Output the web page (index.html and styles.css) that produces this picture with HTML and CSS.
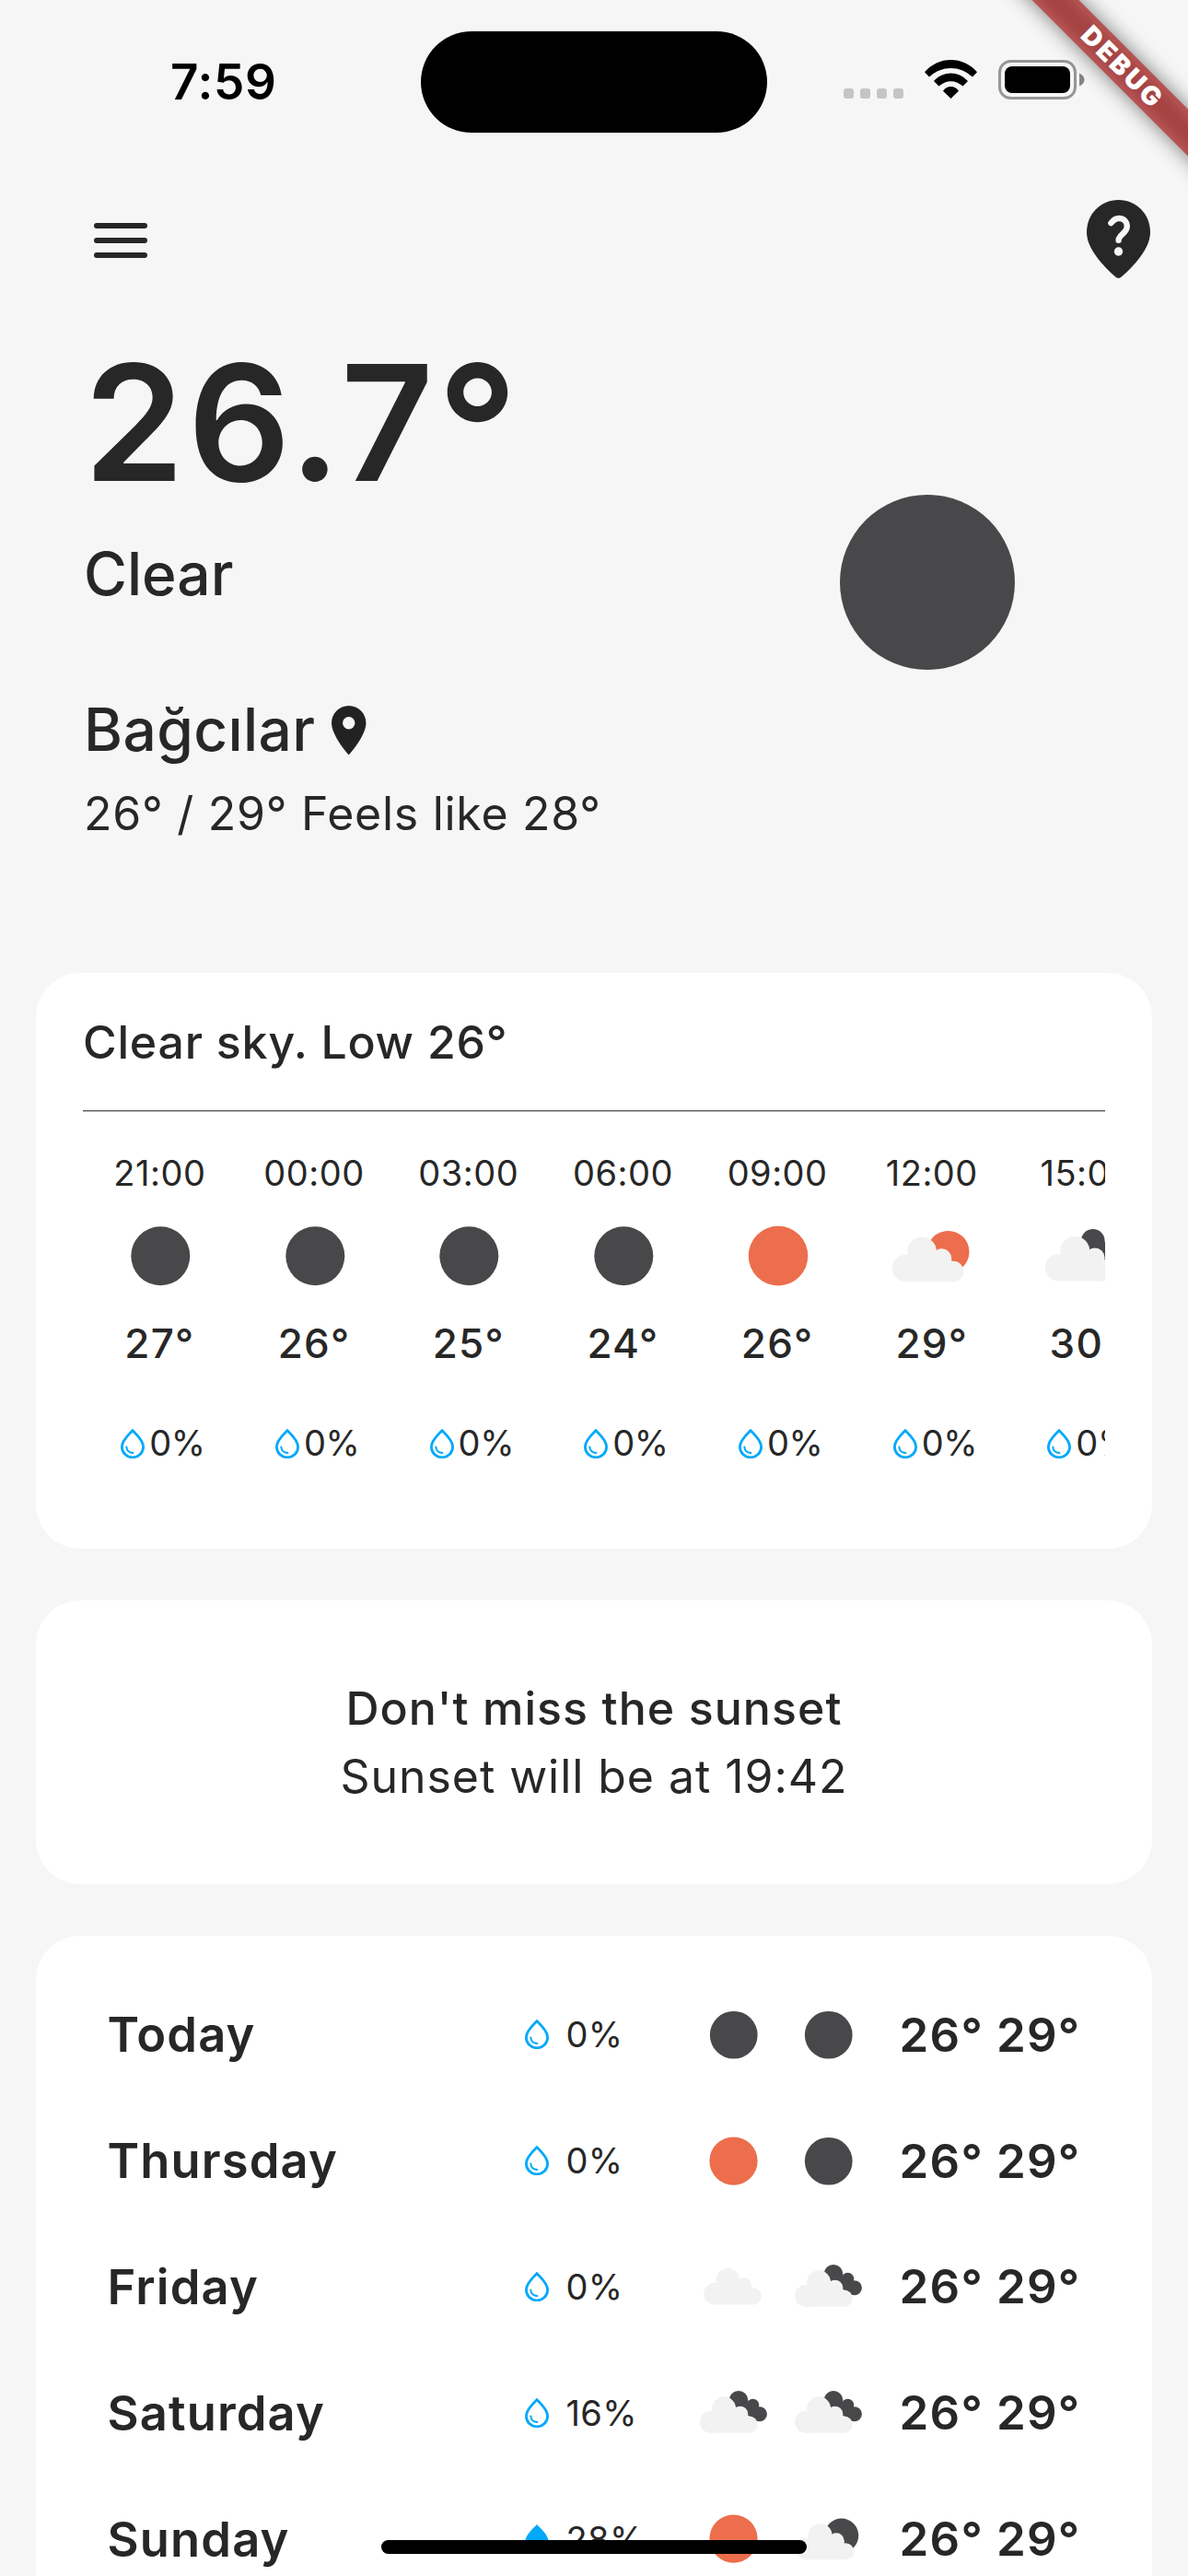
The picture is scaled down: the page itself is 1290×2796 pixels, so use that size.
FILE: index.html
```html
<!DOCTYPE html>
<html lang="en">
<head>
<meta charset="utf-8">
<title>Weather</title>
<link rel="stylesheet" href="styles.css">
</head>
<body>
<svg class="sprite" aria-hidden="true">
  <symbol id="moon" viewBox="0 0 120 120"><circle cx="60.3" cy="60.3" r="32" fill="#48484a"/></symbol>
  <symbol id="sun" viewBox="0 0 120 120"><circle cx="60" cy="60.1" r="32.3" fill="#ec6e4c"/></symbol>
  <symbol id="cloud-shape" viewBox="0 0 120 120">
    <g fill="#f2f2f2">
      <circle cx="31.3" cy="73.6" r="14.6"/><circle cx="49" cy="55.6" r="16"/>
      <circle cx="70.7" cy="62.8" r="10.5"/><circle cx="83" cy="77" r="11.2"/>
      <rect x="31.3" y="62" width="49.9" height="26.2"/><rect x="80" y="70" width="3" height="18.2"/>
    </g>
  </symbol>
  <symbol id="cloud" viewBox="0 0 120 120"><use href="#cloud-shape" x="3.4" y="-3.6" width="120" height="120"/></symbol>
  <symbol id="cloud-sun" viewBox="0 0 120 120">
    <circle cx="77.6" cy="55.8" r="22.9" fill="#ec6e4c"/>
    <use href="#cloud-shape" width="120" height="120"/>
  </symbol>
  <symbol id="cloud-moon" viewBox="0 0 120 120">
    <circle cx="77.6" cy="55.8" r="22.9" fill="#48484a"/>
    <use href="#cloud-shape" width="120" height="120"/>
  </symbol>
  <symbol id="clouds" viewBox="0 0 120 120">
    <g fill="#48484a">
      <circle cx="66.8" cy="43.8" r="12.8"/><circle cx="86" cy="50.2" r="8.4"/><circle cx="95" cy="62.2" r="10"/>
      <path d="M66 50L86 50L96 72L88 70L76 62Z"/>
    </g>
    <use href="#cloud-shape" x="-1.8" y="-.8" width="120" height="120"/>
  </symbol>
  <symbol id="drop" viewBox="0 0 26 32">
    <path d="M13 1.7C9.8 5.2 1.4 12 1.4 19.4A11.6 11.4 0 0 0 24.6 19.4C24.6 12 16.2 5.2 13 1.7Z" fill="none" stroke="#03a9f9" stroke-width="2.8"/>
    <path d="M6.3 19.4C6.6 23.4 9.4 26 13.4 26" fill="none" stroke="#03a9f9" stroke-width="2" stroke-linecap="round"/>
  </symbol>
  <symbol id="drop-full" viewBox="0 0 26 32">
    <path d="M13 0C9.4 4 .2 11.3 .2 19.2A12.8 12.8 0 0 0 25.8 19.2C25.8 11.3 16.6 4 13 0Z" fill="#03a9f9"/>
  </symbol>
</svg>

<div class="screen">
  <header class="status-bar">
    <span class="clock">7:59</span>
    <div class="status-icons">
      <div class="signal"><i></i><i></i><i></i><i></i></div>
      <svg class="wifi" viewBox="0 0 57 42"><path d="M0 13.3A37.2 37.2 0 0 1 57 13.3L52 18.5A33.8 33.8 0 0 0 5 18.5ZM10 23A24.4 24.4 0 0 1 47 23L41.5 28.5A18.8 18.8 0 0 0 15.5 28.5ZM20 33.7A9.9 9.9 0 0 1 37 33.7L28.5 42Z"/></svg>
      <svg class="battery" viewBox="0 0 94 43"><rect x="1.5" y="1.5" width="82" height="40" rx="12" fill="none" stroke="#969696" stroke-width="3"/><rect x="7" y="7" width="71" height="29" rx="8"/><path d="M88 14.5Q93.5 17 93.5 21.5T88 28.5Z" fill="#868686"/></svg>
    </div>
  </header>
  <div class="island"></div>

  <nav class="app-bar">
    <div class="menu"><i></i><i></i><i></i></div>
    <svg class="help-pin" viewBox="0 0 69 85">
      <path d="M34.5 0C54 0 69 15.5 69 35C69 52 53.5 69.5 37.7 83.6Q34.5 86.2 31.3 83.6C15.5 69.5 0 52 0 35C0 15.5 15 0 34.5 0Z" fill="#272727"/>
      <path d="M26.4 25.2C29 21.7 31.8 20 35 20C40.6 20 43.8 24 43.8 28.7C43.8 36 34.6 38 34.6 43.8" fill="none" stroke="#f6f6f6" stroke-width="6.4" stroke-linecap="round"/>
      <circle cx="34.5" cy="56" r="4.7" fill="#f6f6f6"/>
    </svg>
  </nav>

  <section class="hero">
    <div class="current">
      <div class="temperature">26.7<span class="degree">°</span></div>
      <div class="condition">Clear</div>
      <div class="place"><span>Bağcılar</span><svg class="place-pin" viewBox="5 2 14 20"><path d="M12 2C8.13 2 5 5.13 5 9c0 5.25 7 13 7 13s7-7.75 7-13c0-3.87-3.13-7-7-7zm0 9.5a2.5 2.5 0 0 1 0-5 2.5 2.5 0 0 1 0 5z" fill="#222"/></svg></div>
      <div class="range">26° / 29° Feels like 28°</div>
    </div>
    <div class="hero-moon"></div>
  </section>

  <section class="card hourly">
    <h2 class="summary">Clear sky. Low 26°</h2>
    <div class="hours">
      <div class="hour"><span class="time">21:00</span><svg class="hour-icon"><use href="#moon"/></svg><span class="deg">27°</span><span class="rain"><svg class="drop"><use href="#drop"/></svg>0%</span></div>
      <div class="hour"><span class="time">00:00</span><svg class="hour-icon"><use href="#moon"/></svg><span class="deg">26°</span><span class="rain"><svg class="drop"><use href="#drop"/></svg>0%</span></div>
      <div class="hour"><span class="time">03:00</span><svg class="hour-icon"><use href="#moon"/></svg><span class="deg">25°</span><span class="rain"><svg class="drop"><use href="#drop"/></svg>0%</span></div>
      <div class="hour"><span class="time">06:00</span><svg class="hour-icon"><use href="#moon"/></svg><span class="deg">24°</span><span class="rain"><svg class="drop"><use href="#drop"/></svg>0%</span></div>
      <div class="hour"><span class="time">09:00</span><svg class="hour-icon"><use href="#sun"/></svg><span class="deg">26°</span><span class="rain"><svg class="drop"><use href="#drop"/></svg>0%</span></div>
      <div class="hour"><span class="time">12:00</span><svg class="hour-icon"><use href="#cloud-sun"/></svg><span class="deg">29°</span><span class="rain"><svg class="drop"><use href="#drop"/></svg>0%</span></div>
      <div class="hour"><span class="time">15:00</span><svg class="hour-icon"><use href="#clouds"/></svg><span class="deg">30°</span><span class="rain"><svg class="drop"><use href="#drop"/></svg>0%</span></div>
    </div>
  </section>

  <section class="card sunset">
    <p class="sunset-title">Don't miss the sunset</p>
    <p class="sunset-time">Sunset will be at 19:42</p>
  </section>

  <section class="card daily">
    <div class="day"><span class="day-name">Today</span><span class="chance"><svg class="drop"><use href="#drop"/></svg>0%</span><span class="day-icons"><svg><use href="#moon"/></svg><svg><use href="#moon"/></svg></span><span class="day-range">26° 29°</span></div>
    <div class="day"><span class="day-name">Thursday</span><span class="chance"><svg class="drop"><use href="#drop"/></svg>0%</span><span class="day-icons"><svg><use href="#sun"/></svg><svg><use href="#moon"/></svg></span><span class="day-range">26° 29°</span></div>
    <div class="day"><span class="day-name">Friday</span><span class="chance"><svg class="drop"><use href="#drop"/></svg>0%</span><span class="day-icons"><svg><use href="#cloud"/></svg><svg><use href="#clouds"/></svg></span><span class="day-range">26° 29°</span></div>
    <div class="day"><span class="day-name">Saturday</span><span class="chance"><svg class="drop"><use href="#drop"/></svg>16%</span><span class="day-icons"><svg><use href="#clouds"/></svg><svg><use href="#clouds"/></svg></span><span class="day-range">26° 29°</span></div>
    <div class="day"><span class="day-name">Sunday</span><span class="chance"><svg class="drop"><use href="#drop-full"/></svg>28%</span><span class="day-icons"><svg><use href="#sun"/></svg><svg><use href="#cloud-moon"/></svg></span><span class="day-range">26° 29°</span></div>
  </section>

  <div class="home-indicator"></div>
  <div class="ribbon-corner"><div class="ribbon">DEBUG</div></div>
</div>
</body>
</html>
```

FILE: styles.css
```css
* { box-sizing: border-box; }

body {
  margin: 0;
  background: #f6f6f6;
  color: #272727;
  font-family: Inter, "Liberation Sans", sans-serif;
}

svg { display: block; flex: none; }
.sprite { position: absolute; width: 0; height: 0; }

.screen {
  position: relative;
  width: 1290px;
  height: 2796px;
  overflow: hidden;
}

/* Status bar */
.status-bar {
  display: flex;
  justify-content: space-between;
  align-items: flex-start;
  height: 177px;
  padding: 58px 112px 0 185px;
  color: #000;
}
.clock { font-size: 53px; line-height: 62px; font-weight: 600; letter-spacing: .7px; }
.status-icons { display: flex; align-items: flex-end; height: 43px; margin-top: 7px; }
.signal { display: flex; gap: 7px; margin-right: 23px; }
.signal i { width: 11px; height: 11px; border-radius: 3px; background: #c5c5c5; margin-bottom: 1px; }
.wifi { width: 57px; height: 42px; margin: 0 23px 1px 0; }
.battery { width: 94px; height: 43px; }
.island {
  position: absolute;
  top: 33.5px;
  left: 457px;
  width: 376px;
  height: 110.5px;
  border-radius: 56px;
  background: #000;
}

/* App bar */
.app-bar {
  display: flex;
  justify-content: space-between;
  align-items: center;
  height: 168px;
  padding: 0 41px 0 101.5px;
}
.menu { display: grid; gap: 9.6px; }
.menu i { width: 58px; height: 6.5px; border-radius: 3.2px; background: #272727; }
.help-pin { width: 69px; height: 85px; margin-bottom: 3px; }

/* Current weather */
.hero { display: flex; justify-content: space-between; height: 711px; padding: 13px 188px 0 91px; }
.temperature { height: 200px; font-size: 175px; line-height: 200px; font-weight: 600; letter-spacing: 3.8px; }
.degree { font-size: 192px; line-height: 0; vertical-align: -12px; }
.condition { margin-top: 25px; font-size: 64px; line-height: 80px; font-weight: 500; }
.place {
  display: flex;
  align-items: center;
  margin-top: 89px;
  font-size: 64px;
  line-height: 80px;
  font-weight: 500;
  letter-spacing: .4px;
}
.place-pin { width: 37.5px; height: 53.5px; margin: 2px 0 0 17.5px; }
.range { margin-top: 21px; font-size: 50px; line-height: 60px; letter-spacing: .72px; }
.hero-moon { width: 190px; height: 190px; margin-top: 178.5px; border-radius: 50%; background: #48484a; }

/* Cards */
.card { margin: 0 39px 56px; background: #fff; border-radius: 48px; }

.hourly { height: 625px; padding: 45px 51px 0; }
.summary { margin: 0 0 44px; font-size: 50px; line-height: 60px; font-weight: 500; letter-spacing: .78px; }
.hours {
  display: flex;
  overflow: hidden;
  border-top: 1px solid #585858;
  box-shadow: inset 0 1px #bdbdbd;
  padding-top: 44px;
}
.hour { display: flex; flex: none; flex-direction: column; align-items: center; width: 167.7px; }
.time { margin-right: 1px; font-size: 38px; line-height: 46px; letter-spacing: .5px; }
.hour-icon { width: 120px; height: 120px; margin: 7px 0 7.5px; }
.deg { margin-right: 1px; font-size: 44px; line-height: 54px; font-weight: 500; letter-spacing: 1.2px; }
.rain {
  display: flex;
  align-items: center;
  align-self: stretch;
  gap: 5px;
  margin-top: 58.5px;
  padding-left: 41.2px;
  font-size: 38px;
  line-height: 46px;
  letter-spacing: -.4px;
}
.drop { width: 26px; height: 32px; }
.rain .drop { margin-top: 2px; }

.sunset { height: 308px; padding-top: 80px; text-align: center; font-size: 50px; line-height: 74px; }
.sunset p { margin: 0; }
.sunset-title { font-weight: 500; letter-spacing: 1.08px; }
.sunset-time { letter-spacing: .94px; }

.daily { height: 800px; padding: 39px 51px 0 77.6px; }
.day { display: grid; grid-template-columns: 453.5px 177.5px 229px auto; align-items: center; height: 136.8px; }
.day-name { font-size: 52.5px; font-weight: 600; letter-spacing: 1.1px; }
.chance { display: flex; align-items: center; gap: 18.5px; font-size: 38px; line-height: 46px; letter-spacing: .3px; }
.day-icons { display: flex; gap: 6px; }
.day-icons svg { width: 97px; height: 97px; }
.day-range { font-size: 51px; font-weight: 600; letter-spacing: 1.2px; white-space: nowrap; }

/* Overlays */
.home-indicator {
  position: absolute;
  left: 414px;
  top: 2757px;
  width: 462px;
  height: 15px;
  border-radius: 8px;
  background: #000;
}
.ribbon-corner { position: absolute; top: 0; right: 0; width: 240px; height: 240px; overflow: hidden; }
.ribbon,
.ribbon-corner::before {
  position: absolute;
  left: -2px;
  top: 54px;
  width: 340px;
  height: 36px;
  transform: rotate(45deg);
}
.ribbon {
  padding-left: 3px;
  background: rgba(183, 28, 28, .63);
  color: #fff;
  font-size: 28.5px;
  line-height: 36px;
  font-weight: 900;
  letter-spacing: 2.8px;
  text-align: center;
}
.ribbon-corner::before {
  content: "";
  background: rgba(0, 0, 0, .5);
  filter: blur(11px);
}
```
